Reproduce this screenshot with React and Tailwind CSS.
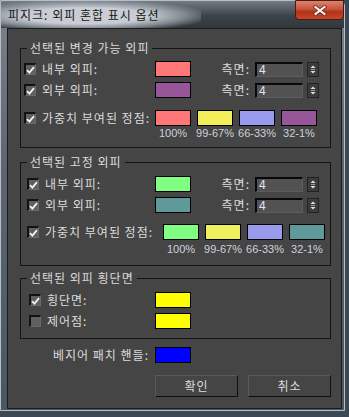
import React from 'react';

// checkbox with sunken border
function Check({ on }) {
  return (
    <span className="flex h-[12px] w-[12px] shrink-0 items-center justify-center border-t-2 border-l-2 border-r border-b border-t-[#121212] border-l-[#121212] border-r-[#6a6a6a] border-b-[#6a6a6a] bg-[#606060]">
      {on && (
        <svg width="9" height="8" viewBox="0 0 9 8">
          <path d="M1 4.2 L3.4 6.6 L8 1.2" fill="none" stroke="#f2f2f2" strokeWidth="1.8" />
        </svg>
      )}
    </span>
  );
}

function Swatch({ color, className = '' }) {
  return <span className={`block h-[16px] w-[36px] shrink-0 border border-black ${color} ${className}`} />;
}

function Spinner() {
  return (
    <svg width="12" height="15" viewBox="0 0 12 15" className="ml-[4px] shrink-0">
      <rect x="0.5" y="0.5" width="11" height="14" fill="#3c3c3c" stroke="#222" />
      <path d="M3.5 6 L6 3.5 L8.5 6 Z" fill="#e2e2e2" />
      <line x1="4" y1="7.5" x2="8" y2="7.5" stroke="#9a9a9a" />
      <path d="M3.5 9 L8.5 9 L6 11.5 Z" fill="#e2e2e2" />
    </svg>
  );
}

function Sides() {
  return (
    <>
      <span className="ml-auto mr-[5px]">측면:</span>
      <span className="flex h-[15px] w-[48px] shrink-0 items-center border-t-2 border-l-2 border-r border-b border-t-[#080808] border-l-[#080808] border-r-[#5c5c5c] border-b-[#5c5c5c] bg-[#525252] pl-[2px] font-['Liberation_Sans',sans-serif] text-[12px] tracking-normal text-[#dfe6ff]">
        4
      </span>
      <Spinner />
    </>
  );
}

function Group({ title, className, children }) {
  return (
    <div className={`w-[311px] border border-[#141414] ${className}`}>
      <div className="-mt-[9px] ml-[6px] w-fit bg-[#454545] px-[3px] leading-[16px]">{title}</div>
      {children}
    </div>
  );
}

function Percents({ pad }) {
  const labels = ['100%', '99-67%', '66-33%', '32-1%'];
  return (
    <div className={`flex h-[13px] gap-[6px] font-['Liberation_Sans',sans-serif] text-[11px] leading-[13px] tracking-normal text-[#cdd3dc] ${pad}`}>
      {labels.map((l) => (
        <span key={l} className="flex w-[36px] justify-center whitespace-nowrap">{l}</span>
      ))}
    </div>
  );
}

export default function App() {
  return (
    <div className="h-[417px] w-[349px] overflow-hidden bg-[#3c4856] font-['Noto_Sans_CJK_KR',sans-serif] text-[12px] leading-[16px] tracking-[1px] text-[#dcdcdc]">
      <div className="h-[411px] w-[345px] rounded-tr-[6px] border border-[#b7bec5] bg-[linear-gradient(180deg,#7b838b_0%,#5d666f_40%,#4b5661_100%)]">
        {/* Title bar */}
        <div className="flex h-[27px] bg-[linear-gradient(180deg,#737b83_0%,#3d434a_55%,#30363c_100%)]">
          <span className="flex h-[27px] w-[200px] items-center bg-[radial-gradient(ellipse_at_42%_55%,rgba(205,210,216,0.97)_38%,rgba(170,177,184,0.65)_60%,rgba(120,127,134,0)_78%)] pl-[7px] text-[12px] text-[#141414]">
            피지크: 외피 혼합 표시 옵션
          </span>
          <span className="-mt-[1px] ml-auto flex h-[20px] w-[49px] items-center justify-center rounded-b-[4px] border border-[#4a1810] bg-[linear-gradient(180deg,#d98471_0%,#c9553b_45%,#b43217_60%,#c8482a_100%)]">
            <svg width="16" height="11" viewBox="0 0 16 11">
              <path d="M3.5 2 L12.5 9 M12.5 2 L3.5 9" stroke="#6a2a1c" strokeWidth="3.8" strokeLinecap="square" />
              <path d="M3.5 2 L12.5 9 M12.5 2 L3.5 9" stroke="#f4f4f4" strokeWidth="2.2" strokeLinecap="square" />
            </svg>
          </span>
        </div>

        {/* Client area */}
        <div className="ml-[6px] h-[381px] w-[335px] border border-[#1c1c1c] bg-[#454545] pl-[12px] pt-[19px]">
          <Group title="선택된 변경 가능 외피" className="pb-[7px]">
            <div className="mt-[5px] flex h-[16px] items-center pl-[3px] pr-[11px]">
              <Check on />
              <span className="ml-[6px] w-[113px]">내부 외피:</span>
              <Swatch color="bg-[#ff7777]" />
              <Sides />
            </div>
            <div className="mt-[5px] flex h-[16px] items-center pl-[3px] pr-[11px]">
              <Check on />
              <span className="ml-[6px] w-[113px]">외부 외피:</span>
              <Swatch color="bg-[#995599]" />
              <Sides />
            </div>
            <div className="mt-[12px] flex h-[16px] items-center gap-[6px] pl-[3px]">
              <Check on />
              <span className="w-[107px] whitespace-nowrap">가중치 부여된 정점:</span>
              <Swatch color="bg-[#ff7777]" />
              <Swatch color="bg-[#f2ee5a]" />
              <Swatch color="bg-[#9a9aee]" />
              <Swatch color="bg-[#995599]" />
            </div>
            <div className="mt-[1px]">
              <Percents pad="pl-[134px]" />
            </div>
          </Group>

          <Group title="선택된 고정 외피" className="mt-[14px] pb-[9px]">
            <div className="mt-[6px] flex h-[16px] items-center pl-[6px] pr-[11px]">
              <Check on />
              <span className="ml-[6px] w-[110px]">내부 외피:</span>
              <Swatch color="bg-[#80ff80]" />
              <Sides />
            </div>
            <div className="mt-[5px] flex h-[16px] items-center pl-[6px] pr-[11px]">
              <Check on />
              <span className="ml-[6px] w-[110px]">외부 외피:</span>
              <Swatch color="bg-[#5f9999]" />
              <Sides />
            </div>
            <div className="mt-[11px] flex h-[16px] items-center gap-[6px] pl-[6px]">
              <Check on />
              <span className="w-[112px] whitespace-nowrap">가중치 부여된 정점:</span>
              <Swatch color="bg-[#80ff80]" />
              <Swatch color="bg-[#eef060]" />
              <Swatch color="bg-[#9a9aee]" />
              <Swatch color="bg-[#5f9999]" />
            </div>
            <div className="mt-[3px]">
              <Percents pad="pl-[142px]" />
            </div>
          </Group>

          <Group title="선택된 외피 횡단면" className="mt-[12px] pb-[9px]">
            <div className="mt-[6px] flex h-[16px] items-center pl-[8px]">
              <Check on />
              <span className="ml-[6px] w-[108px]">횡단면:</span>
              <Swatch color="bg-[#ffff00]" />
            </div>
            <div className="mt-[5px] flex h-[16px] items-center pl-[8px]">
              <Check />
              <span className="ml-[6px] w-[108px]">제어점:</span>
              <Swatch color="bg-[#ffff00]" />
            </div>
          </Group>

          <div className="mt-[8px] flex h-[16px] items-center">
            <span className="w-[129px] whitespace-nowrap text-right">베지어 패치 핸들:</span>
            <Swatch color="bg-[#0000ff]" className="ml-[6px]" />
          </div>

          <div className="mt-[12px] flex gap-[10px] pl-[135px]">
            <button className="h-[22px] w-[83px] border border-t-[#5a5a5a] border-l-[#5a5a5a] border-r-[#0e0e0e] border-b-[#0e0e0e] bg-[#454545] text-[12px] leading-[16px] tracking-[1px] text-[#dcdcdc]">
              확인
            </button>
            <button className="h-[22px] w-[83px] border border-t-[#5a5a5a] border-l-[#5a5a5a] border-r-[#0e0e0e] border-b-[#0e0e0e] bg-[#454545] text-[12px] leading-[16px] tracking-[1px] text-[#dcdcdc]">
              취소
            </button>
          </div>
        </div>
      </div>
    </div>
  );
}
